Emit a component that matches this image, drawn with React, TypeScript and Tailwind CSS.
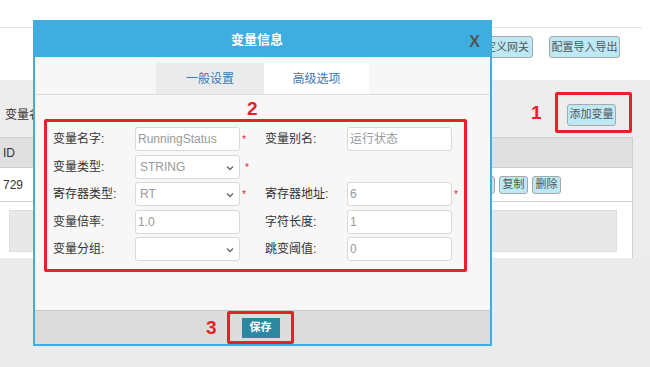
import React from "react";

const font = "font-['Liberation_Sans','Noto_Sans_CJK_SC',sans-serif]";

function LightBtn({ children, className = "" }: { children: React.ReactNode; className?: string }) {
  return (
    <div
      className={`flex items-center justify-center whitespace-nowrap rounded-[3px] border border-[#a8a8a8] bg-[#bde9f7] text-[11px] leading-none text-[#555] ${className}`}
    >
      {children}
    </div>
  );
}

function Chevron() {
  return (
    <svg width="8" height="6" viewBox="0 0 8 6" className="absolute right-[5px] top-[9px]">
      <polyline points="1,1.5 4,4.5 7,1.5" fill="none" stroke="#666" strokeWidth="1.3" />
    </svg>
  );
}

function Field({
  label,
  value,
  select,
  star,
  starWide,
}: {
  label: string;
  value?: string;
  select?: boolean;
  star?: boolean;
  starWide?: boolean;
}) {
  return (
    <div className="flex h-[24px] items-center">
      <div className="w-[82px] text-[12px] leading-none text-[#333]">{label}</div>
      <div className="relative h-[24px] w-[105px] rounded-[3px] border border-[#d9d9d9] bg-white">
        <div className={`flex h-full items-center ${select ? "pl-[4px]" : "pl-[2px]"} text-[12px] text-[#999]`}>
          {value}
        </div>
        {select && <Chevron />}
      </div>
      <div className="relative h-[24px] w-[25px]">
        {star && (
          <span
            className={`absolute top-[8px] ${starWide ? "left-[5px]" : "left-[2px]"} text-[10px] leading-none text-[#e8202a]`}
          >
            *
          </span>
        )}
      </div>
    </div>
  );
}

function Empty() {
  return <div className="h-[24px]" />;
}

export default function App() {
  return (
    <div className={`relative h-[367px] w-[650px] overflow-hidden bg-[#ebebeb] ${font}`}>
      {/* top white header area */}
      <div className="h-[80px] bg-white">
        <div className="mr-[8px] h-[28px] border-b border-[#e2e2e2]" />
        <div className="flex justify-end gap-[16px] pr-[30px] pt-[8px]">
          <LightBtn className="h-[22px] w-[52px]">定义网关</LightBtn>
          <LightBtn className="h-[22px] w-[71px]">配置导入导出</LightBtn>
        </div>
      </div>

      {/* grey content */}
      <div className="bg-[#ededed]">
        <div className="flex h-[57px] items-center justify-between pl-[5px] pr-[34px] pt-[12px]">
          <span className="text-[12px] text-[#333]">变量名</span>
          <LightBtn className="h-[22px] w-[49px]">添加变量</LightBtn>
        </div>
        <div className="w-[633px] border-r border-[#cfcfcf] bg-white">
          <div className="flex h-[31px] items-center border-y border-[#cfcfcf] bg-[#e0e0e0] pl-[3px] text-[12px] text-[#333]">
            ID
          </div>
          <div className="flex h-[34px] items-center justify-between border-b border-[#cfcfcf] pl-[3px] pr-[71px] text-[12px] text-[#333]">
            <span>729</span>
            <div className="flex gap-[4px]">
              <LightBtn className="h-[18px] w-[30px]">编辑</LightBtn>
              <LightBtn className="h-[18px] w-[29px]">复制</LightBtn>
              <LightBtn className="h-[18px] w-[29px]">删除</LightBtn>
            </div>
          </div>
          <div className="pb-[6px] pl-[9px] pr-[15px] pt-[8px]">
            <div className="h-[42px] border border-[#dedede] bg-[#e8e8e8]" />
          </div>
        </div>
      </div>

      {/* annotation 1 */}
      <span className="absolute left-[531px] top-[103px] text-[19px] font-bold leading-none text-[#e8202a]">
        1
      </span>
      <div className="absolute left-[555px] top-[92px] h-[41px] w-[77px] rounded-[2px] border-[3px] border-[#e8202a]" />

      {/* modal */}
      <div className="absolute left-[33px] top-[20px] w-[459px] border-2 border-[#3eaee0] bg-[#f7f7f7]">
        <div className="relative flex h-[35px] items-center justify-center bg-[#3eaee0] pr-[11px]">
          <span className="text-[13px] font-bold text-white">变量信息</span>
          <span className="absolute right-[10px] top-[12px] font-['Liberation_Sans',sans-serif] text-[16px] font-bold leading-none text-[#555]">
            X
          </span>
        </div>

        <div className="flex justify-center border-b border-[#dcdcdc] pt-[6px]">
          <div className="flex h-[31px] w-[108px] items-center justify-center bg-[#ebebeb] text-[12px] text-[#3a78b0]">
            一般设置
          </div>
          <div className="flex h-[31px] w-[105px] items-center justify-center bg-white text-[12px] text-[#3a78b0]">
            高级选项
          </div>
        </div>

        <div className="h-[24px] pl-[212px] pt-[4px] text-[19px] font-bold leading-none text-[#e8202a]">2</div>

        <div className="ml-[9px] w-[423px] rounded-[2px] border-[3px] border-[#e8202a] pb-[8px] pl-[6px] pt-[5px]">
          <div className="grid grid-cols-[212px_212px] gap-y-[3.5px]">
            <Field label="变量名字:" value="RunningStatus" star />
            <Field label="变量别名:" value="运行状态" />
            <Field label="变量类型:" value="STRING" select star starWide />
            <Empty />
            <Field label="寄存器类型:" value="RT" select star />
            <Field label="寄存器地址:" value="6" star />
            <Field label="变量倍率:" value="1.0" />
            <Field label="字符长度:" value="1" />
            <Field label="变量分组:" value="" select />
            <Field label="跳变阈值:" value="0" />
          </div>
        </div>

        <div className="h-[38px]" />

        <div className="flex h-[34px] items-center border-t border-[#c8c8c8] bg-[#dcdcdc] pl-[171px]">
          <span className="w-[21px] text-[19px] font-bold leading-none text-[#e8202a]">3</span>
          <div className="flex h-[33px] w-[67px] items-center justify-center rounded-[2px] border-[3px] border-[#e8202a]">
            <div className="flex h-[20px] w-[38px] items-center justify-center bg-[#2d87a1] text-[11px] font-bold text-white">
              保存
            </div>
          </div>
        </div>
      </div>
    </div>
  );
}
